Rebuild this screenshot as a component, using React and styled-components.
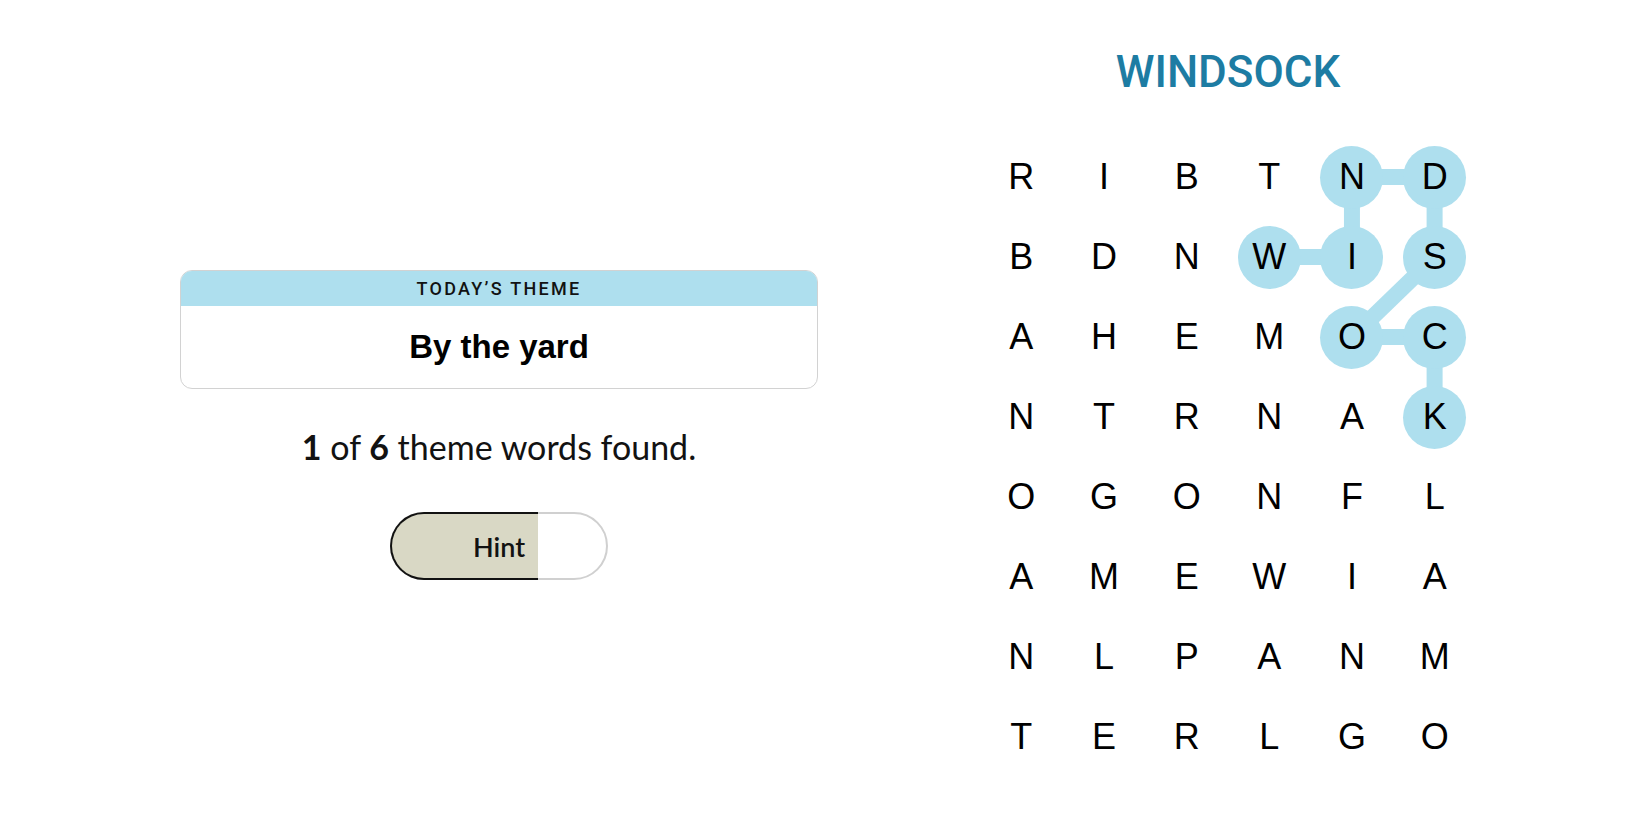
import React from "react";
import styled, { createGlobalStyle } from "styled-components";

const GlobalStyle = createGlobalStyle`
  html, body { margin: 0; padding: 0; background: #ffffff; }
  body { font-family: Lato, "Open Sans", sans-serif; color: #121212; }
`;

const Page = styled.main`
  display: flex;
  align-items: flex-start;
  gap: 162px;
  padding-left: 180px;
  width: 1650px;
  height: 825px;
  box-sizing: border-box;
  overflow: hidden;
`;

const LeftColumn = styled.section`
  width: 638px;
  padding-top: 270px;
  display: flex;
  flex-direction: column;
  align-items: center;
`;

const ThemeCard = styled.div`
  width: 100%;
  border: 1px solid #d2d2d2;
  border-radius: 12px;
  overflow: hidden;
  box-sizing: border-box;
  background: #fff;
`;

const ThemeHeader = styled.div`
  height: 35px;
  background: #aedfee;
  display: flex;
  align-items: center;
  justify-content: center;
  font-family: Roboto, "Liberation Sans", sans-serif;
  font-weight: 500;
  font-size: 18px;
  letter-spacing: 2.3px;
  color: #121212;
`;

const ThemeBody = styled.div`
  height: 82px;
  display: flex;
  align-items: center;
  justify-content: center;
  font-family: "Liberation Sans", Arial, sans-serif;
  font-weight: 700;
  font-size: 33px;
  color: #000;
`;

const FoundText = styled.p`
  margin: 38px 0 0;
  font-family: Lato, sans-serif;
  font-size: 34px;
  line-height: 40px;
  color: #121212;
  b { font-weight: 700; }
`;

const HintButton = styled.button`
  position: relative;
  margin-top: 45px;
  width: 218px;
  height: 68px;
  border: 2px solid #d0d0d0;
  border-radius: 34px;
  background: #fff;
  padding: 0;
  display: flex;
  align-items: center;
  justify-content: center;
  font-family: Lato, sans-serif;
  font-weight: 600;
  font-size: 27px;
  color: #121212;
  cursor: pointer;
`;

const HintFill = styled.span`
  position: absolute;
  top: -2px;
  left: -2px;
  bottom: -2px;
  border: 2px solid #121212;
  border-right: none;
  border-radius: 34px 0 0 34px;
  background: #d9d8c5;
`;

const HintLabel = styled.span`
  position: relative;
`;

const RightColumn = styled.section`
  width: 496px;
  padding-top: 46px;
  display: flex;
  flex-direction: column;
  align-items: center;
`;

const Title = styled.h1`
  margin: 0;
  font-family: Roboto, "Liberation Sans", sans-serif;
  font-weight: 500;
  font-size: 44px;
  line-height: 52px;
  color: #1d7ca3;
`;

const Board = styled.div`
  position: relative;
  margin-top: 39px;
  display: grid;
  grid-template-columns: repeat(6, 82.67px);
  grid-template-rows: repeat(8, 80px);
`;

const PathLayer = styled.svg`
  position: absolute;
  inset: 0;
  width: 100%;
  height: 100%;
  pointer-events: none;
`;

const Cell = styled.div`
  position: relative;
  display: flex;
  align-items: center;
  justify-content: center;
`;

const Letter = styled.span`
  width: 63px;
  height: 63px;
  border-radius: 50%;
  background: ${(p) => (p.$found ? "#aedfee" : "transparent")};
  display: flex;
  align-items: center;
  justify-content: center;
  font-family: "Liberation Sans", Arial, sans-serif;
  font-size: 36px;
  color: #000;
`;

const rows = [
  "RIBTND",
  "BDNWIS",
  "AHEMOC",
  "NTRNAK",
  "OGONFL",
  "AMEWIA",
  "NLPANM",
  "TERLGO",
];

const path = [
  [1, 3],
  [1, 4],
  [0, 4],
  [0, 5],
  [1, 5],
  [2, 4],
  [2, 5],
  [3, 5],
];

const CW = 82.67;
const RH = 80;
const cx = (c) => c * CW + CW / 2;
const cy = (r) => r * RH + RH / 2;

export default function App() {
  const found = new Set(path.map(([r, c]) => `${r}-${c}`));
  return (
    <>
      <GlobalStyle />
      <Page>
        <LeftColumn>
          <ThemeCard>
            <ThemeHeader>TODAY’S THEME</ThemeHeader>
            <ThemeBody>By the yard</ThemeBody>
          </ThemeCard>
          <FoundText>
            <b>1</b> of <b>6</b> theme words found.
          </FoundText>
          <HintButton>
            <HintFill style={{ width: "68%" }} />
            <HintLabel>Hint</HintLabel>
          </HintButton>
        </LeftColumn>
        <RightColumn>
          <Title>WINDSOCK</Title>
          <Board>
            <PathLayer viewBox={`0 0 ${CW * 6} ${RH * 8}`}>
              {path.slice(1).map(([r, c], i) => {
                const [pr, pc] = path[i];
                return (
                  <line
                    key={i}
                    x1={cx(pc)}
                    y1={cy(pr)}
                    x2={cx(c)}
                    y2={cy(r)}
                    stroke="#aedfee"
                    strokeWidth="16"
                  />
                );
              })}
            </PathLayer>
            {rows.map((row, r) =>
              row.split("").map((ch, c) => (
                <Cell key={`${r}-${c}`}>
                  <Letter $found={found.has(`${r}-${c}`)}>{ch}</Letter>
                </Cell>
              ))
            )}
          </Board>
        </RightColumn>
      </Page>
    </>
  );
}
